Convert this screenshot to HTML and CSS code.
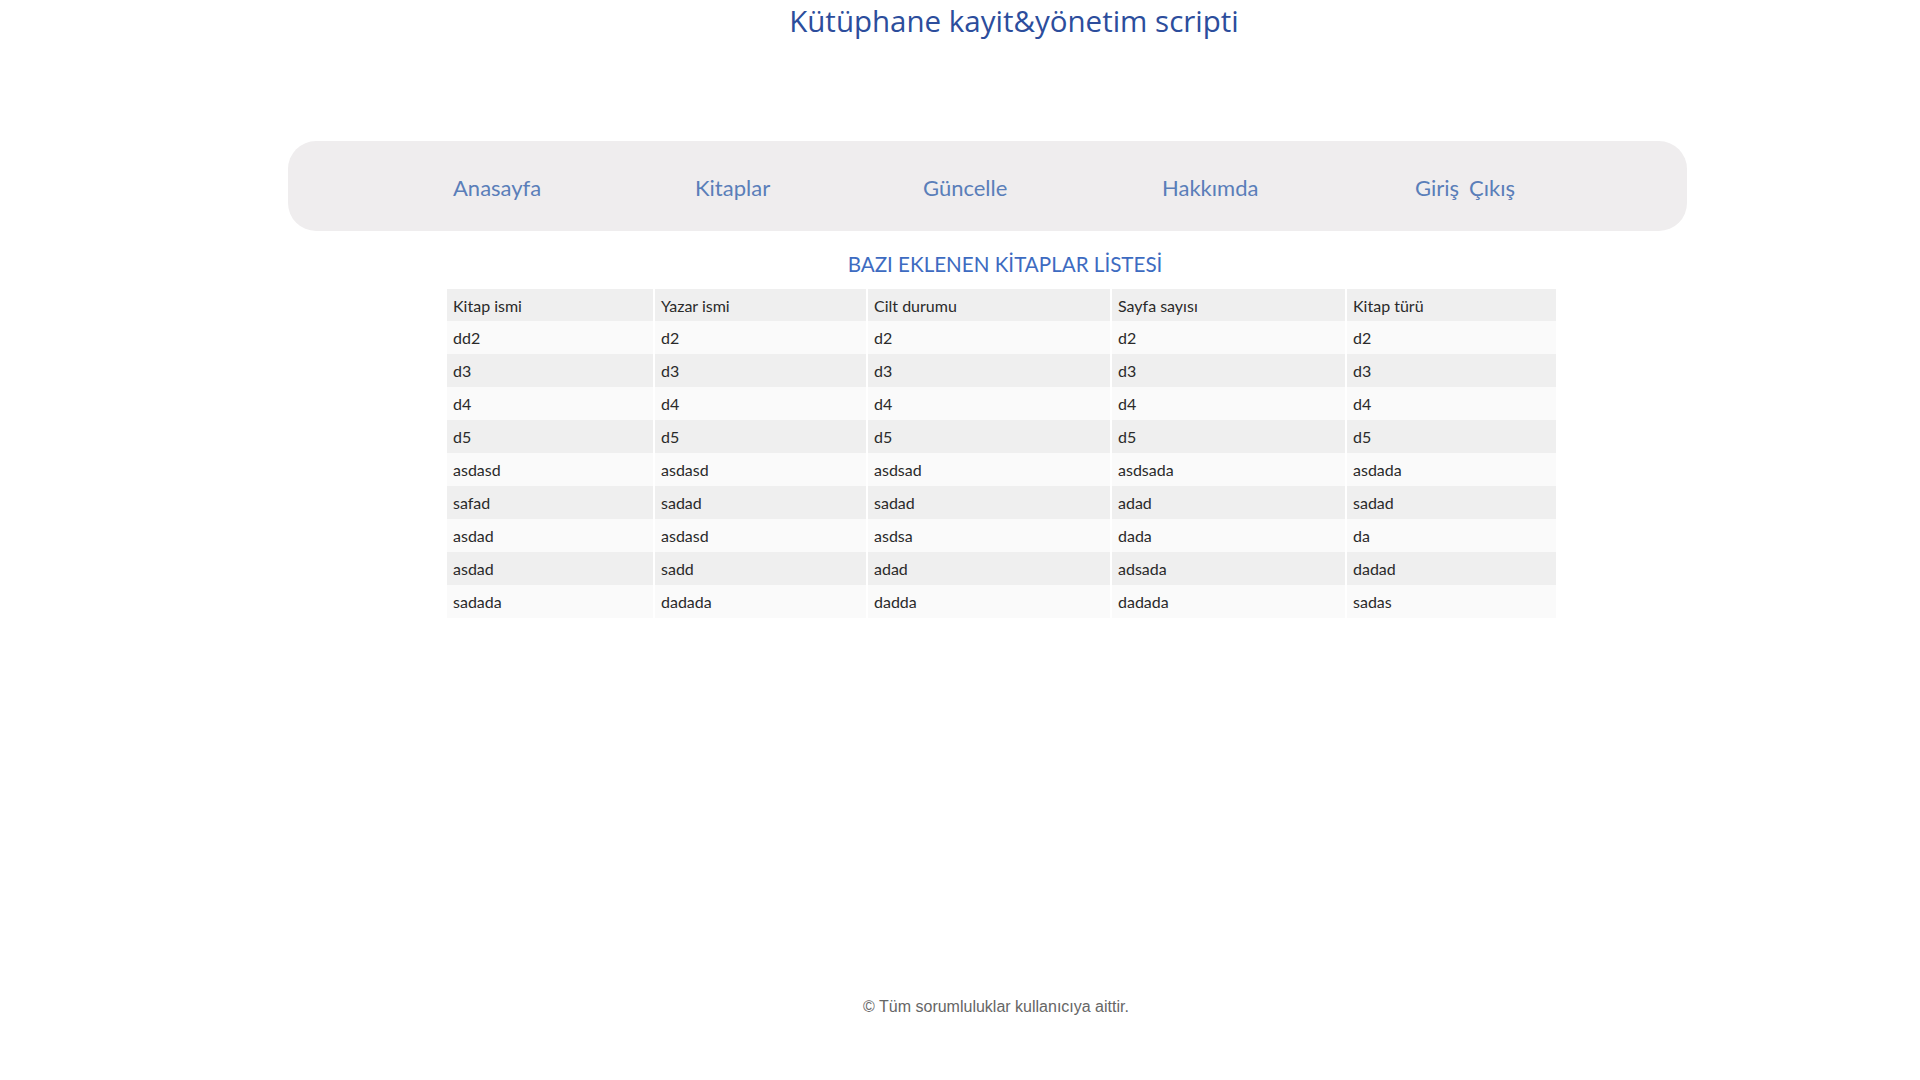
FILE: index.html
```html
<!DOCTYPE html>
<html lang="tr">
<head>
<meta charset="utf-8">
<title>Kütüphane kayit&amp;yönetim scripti</title>
<link rel="stylesheet" href="styles.css">
</head>
<body>
<header class="site-header">
  <h1 class="site-title">Kütüphane kayit&amp;yönetim scripti</h1>
</header>
<nav class="main-nav">
  <ul class="nav-list">
    <li><a href="#">Anasayfa</a></li>
    <li><a href="#">Kitaplar</a></li>
    <li><a href="#">Güncelle</a></li>
    <li><a href="#">Hakkımda</a></li>
    <li><a href="#">Giriş</a><a href="#" class="nav-second">Çıkış</a></li>
  </ul>
</nav>
<main class="content">
  <h2 class="list-title">BAZI EKLENEN KİTAPLAR LİSTESİ</h2>
  <table class="book-table">
    <colgroup>
      <col class="c1"><col class="c2"><col class="c3"><col class="c4"><col class="c5">
    </colgroup>
    <thead>
      <tr><th>Kitap ismi</th><th>Yazar ismi</th><th>Cilt durumu</th><th>Sayfa sayısı</th><th>Kitap türü</th></tr>
    </thead>
    <tbody>
      <tr><td>dd2</td><td>d2</td><td>d2</td><td>d2</td><td>d2</td></tr>
      <tr><td>d3</td><td>d3</td><td>d3</td><td>d3</td><td>d3</td></tr>
      <tr><td>d4</td><td>d4</td><td>d4</td><td>d4</td><td>d4</td></tr>
      <tr><td>d5</td><td>d5</td><td>d5</td><td>d5</td><td>d5</td></tr>
      <tr><td>asdasd</td><td>asdasd</td><td>asdsad</td><td>asdsada</td><td>asdada</td></tr>
      <tr><td>safad</td><td>sadad</td><td>sadad</td><td>adad</td><td>sadad</td></tr>
      <tr><td>asdad</td><td>asdasd</td><td>asdsa</td><td>dada</td><td>da</td></tr>
      <tr><td>asdad</td><td>sadd</td><td>adad</td><td>adsada</td><td>dadad</td></tr>
      <tr><td>sadada</td><td>dadada</td><td>dadda</td><td>dadada</td><td>sadas</td></tr>
    </tbody>
  </table>
</main>
<footer class="site-footer">© Tüm sorumluluklar kullanıcıya aittir.</footer>
</body>
</html>
```
FILE: styles.css
```css
html, body {
  margin: 0;
  padding: 0;
  background: #ffffff;
}

body {
  font-family: "Lato", "Open Sans", sans-serif;
  color: #222;
}

.site-header {
  height: 40px;
}

.site-title {
  margin: 0;
  padding: 1px 0 0 108px;
  text-align: center;
  font-family: "Open Sans", "DejaVu Sans", sans-serif;
  font-weight: 400;
  font-size: 29.5px;
  line-height: 39px;
  color: #2c4d9c;
}

.main-nav {
  margin: 101px 0 0 288px;
  width: 1399px;
  height: 90px;
  background: #efedee;
  border-radius: 28px;
  display: flex;
  align-items: center;
}

.nav-list {
  list-style: none;
  margin: 0 0 0 165px;
  padding: 0;
  display: grid;
  grid-template-columns: 242px 228px 239px 253px auto;
  align-items: center;
}

.nav-list li {
  display: flex;
}

.nav-list a {
  font-family: "Lato", "Open Sans", sans-serif;
  font-size: 22px;
  line-height: 28px;
  color: #5a7eb9;
  text-decoration: none;
  padding-top: 4px;
}

.nav-list .nav-second {
  margin-left: 10px;
}

.content {
  padding: 0;
}

.list-title {
  margin: 21px 0 0 0;
  padding-left: 90px;
  text-align: center;
  font-family: "Lato", "Open Sans", sans-serif;
  font-weight: 400;
  font-size: 20.6px;
  line-height: 24px;
  color: #3d6bc1;
}

.book-table {
  margin: 13px 0 0 447px;
  border-collapse: collapse;
  table-layout: fixed;
  width: 1109px;
  font-family: "Lato", "Open Sans", sans-serif;
  font-size: 16px;
  color: #2a2a2a;
}

.book-table .c1 { width: 207px; }
.book-table .c2 { width: 213px; }
.book-table .c3 { width: 244px; }
.book-table .c4 { width: 235px; }
.book-table .c5 { width: 210px; }

.book-table th,
.book-table td {
  text-align: left;
  font-weight: 400;
  padding: 0 6px;
  border-left: 2px solid #ffffff;
  white-space: nowrap;
}

.book-table th:first-child,
.book-table td:first-child {
  border-left: none;
}

.book-table thead tr {
  height: 32px;
  background: #efefef;
}

.book-table tbody tr {
  height: 33px;
}

.book-table tbody tr:nth-child(odd) {
  background: #fafafa;
}

.book-table tbody tr:nth-child(even) {
  background: #efefef;
}

.site-footer {
  margin-top: 380px;
  padding-left: 72px;
  text-align: center;
  font-family: "Liberation Sans", Arial, sans-serif;
  font-size: 16px;
  line-height: 18px;
  color: #666;
}
```
